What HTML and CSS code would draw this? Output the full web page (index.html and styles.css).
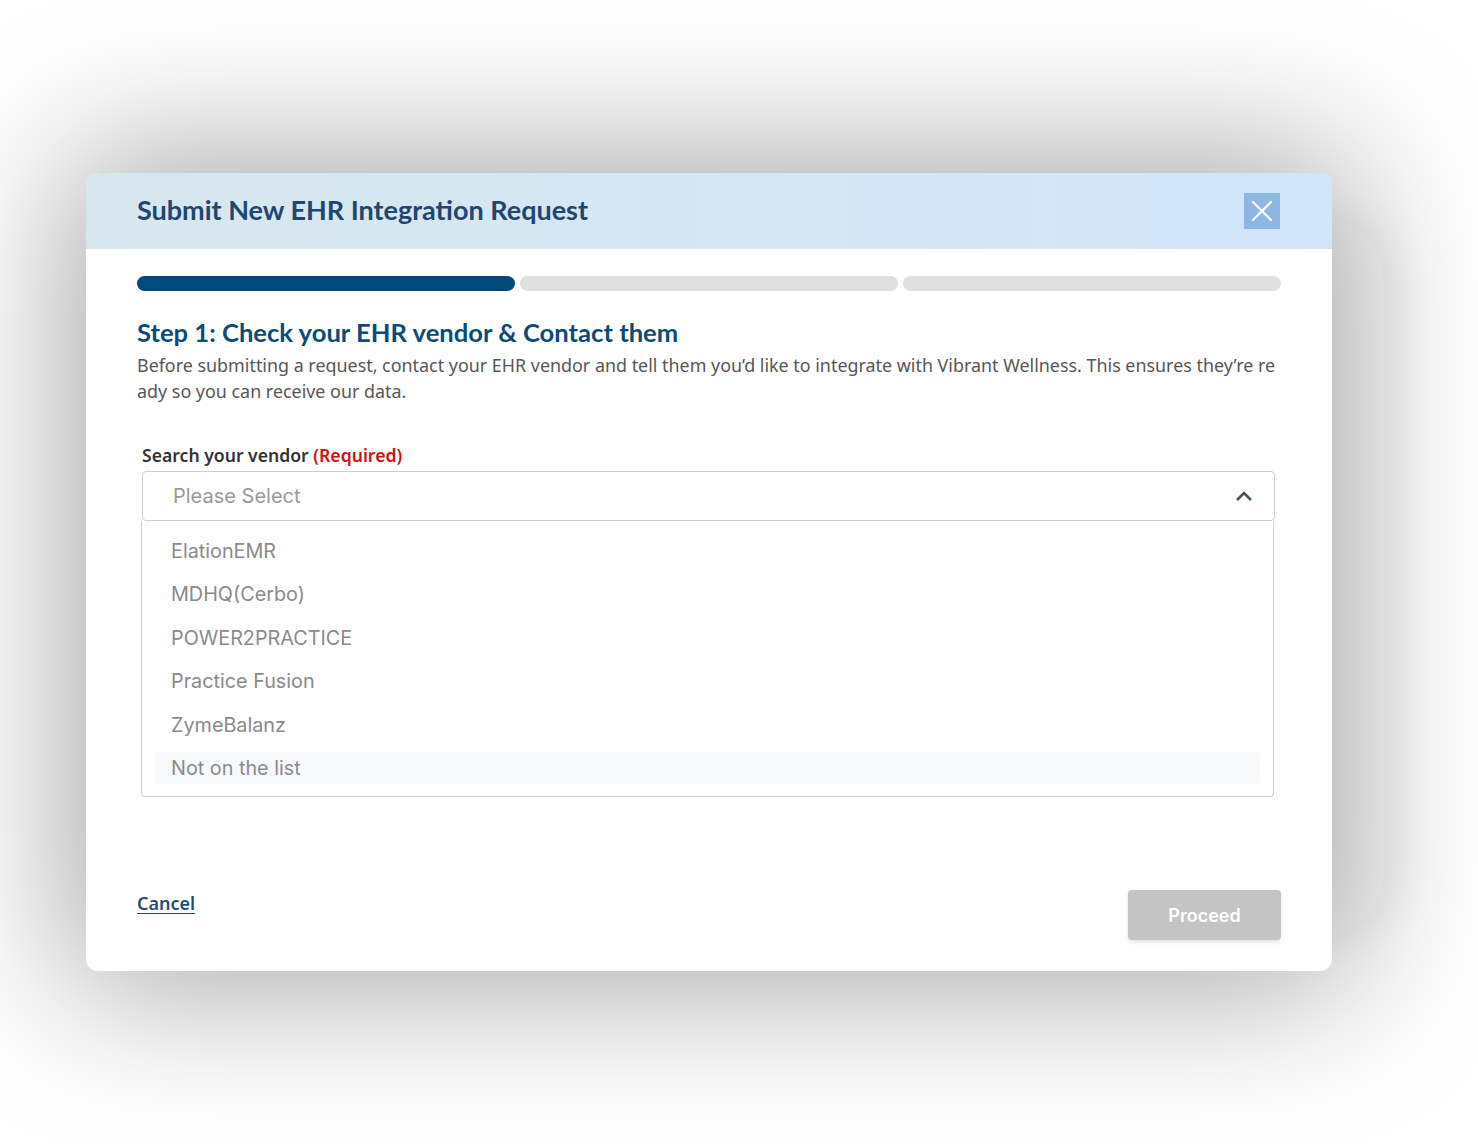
FILE: index.html
```html
<!DOCTYPE html>
<html lang="en">
<head>
    <meta charset="UTF-8">
    <meta name="viewport" content="width=device-width, initial-scale=1.0">
    <title>Submit New EHR Integration Request</title>
    <link rel="stylesheet" href="styles.css">
</head>
<body>
    <div class="stage">
        <div class="modal">
            <header class="modal-header">
                <h1>Submit New EHR Integration Request</h1>
                <button class="close-btn" type="button" aria-label="Close">
                    <svg width="22" height="22" viewBox="0 0 22 22">
                        <path d="M2 2 L20 20 M20 2 L2 20" stroke="#fff" stroke-width="2.4" stroke-linecap="round" fill="none"/>
                    </svg>
                </button>
            </header>

            <div class="modal-body">
                <div class="progress">
                    <span class="bar active"></span>
                    <span class="bar"></span>
                    <span class="bar"></span>
                </div>

                <h2 class="step-title">Step 1: Check your EHR vendor &amp; Contact them</h2>
                <p class="step-desc">Before submitting a request, contact your EHR vendor and tell them you’d like to integrate with Vibrant Wellness. This ensures they’re ready so you can receive our data.</p>

                <div class="field">
                    <label class="field-label">Search your vendor <span class="required">(Required)</span></label>
                    <div class="select">
                        <span class="placeholder">Please Select</span>
                        <svg width="18" height="12" viewBox="0 0 18 12">
                            <path d="M2 10 L9 3 L16 10" stroke="#3b5364" stroke-width="2.6" fill="none"/>
                        </svg>
                    </div>
                    <ul class="options">
                        <li>ElationEMR</li>
                        <li>MDHQ(Cerbo)</li>
                        <li>POWER2PRACTICE</li>
                        <li>Practice Fusion</li>
                        <li>ZymeBalanz</li>
                        <li class="hover">Not on the list</li>
                    </ul>
                </div>
            </div>

            <footer class="modal-footer">
                <a href="#" class="cancel">Cancel</a>
                <button class="proceed" type="button" disabled>Proceed</button>
            </footer>
        </div>
    </div>
</body>
</html>
```

FILE: styles.css
```css
* {
    box-sizing: border-box;
}
body {
    margin: 0;
    background: #fff;
    font-family: "Noto Sans", sans-serif;
    overflow: hidden;
}
.stage {
    padding: 173px 146px 0 86px;
    height: 1144px;
}
.modal {
    position: relative;
    width: 1246px;
    height: 798px;
    background: #fff;
    border-radius: 12px;
    box-shadow: 0 0 150px 20px rgba(0, 0, 0, 0.34);
    display: flex;
    flex-direction: column;
}
/* faint card peeking out behind the right edge */
.modal::before {
    content: "";
    position: absolute;
    top: 42px;
    bottom: 32px;
    right: -52px;
    width: 300px;
    background: #fbfbfb;
    border-radius: 0 70px 70px 0;
    z-index: -1;
    box-shadow: 20px 0 40px rgba(0, 0, 0, 0.04);
}
.modal-header {
    height: 76px;
    padding: 0 51px;
    display: flex;
    align-items: center;
    justify-content: space-between;
    background: linear-gradient(90deg, #d8e7ee 0%, #d2e5f9 100%);
    border-radius: 12px 12px 0 0;
}
.modal-header h1 {
    margin: 0 0 4px;
    font-family: Lato, sans-serif;
    font-weight: 700;
    font-size: 27px;
    color: #1e4670;
}
.close-btn {
    width: 36px;
    height: 36px;
    margin-right: 1px;
    border: none;
    padding: 0;
    background: #8db6e4;
    display: flex;
    align-items: center;
    justify-content: center;
    cursor: pointer;
}
.modal-body {
    padding: 27px 51px 0;
}
.progress {
    display: flex;
    gap: 5px;
}
.bar {
    flex: 1;
    height: 15px;
    border-radius: 8px;
    background: #e0e0e0;
}
.bar.active {
    background: #00497d;
}
.step-title {
    margin: 24px 0 3px;
    font-family: Lato, sans-serif;
    font-weight: 700;
    font-size: 25.6px;
    line-height: 34px;
    color: #0b4b7c;
}
.step-desc {
    margin: 0;
    font-size: 17.9px;
    line-height: 26px;
    color: #575757;
    word-break: break-all;
}
.field {
    margin: 39px 6px 0 5px;
}
.field-label {
    display: block;
    font-weight: 600;
    font-size: 17.6px;
    line-height: 24px;
    color: #333;
    margin-bottom: 4px;
}
.required {
    color: #d40f0f;
}
.select {
    height: 50px;
    border: 1px solid #cfcfcf;
    border-radius: 4px;
    padding: 0 21px 0 30px;
    display: flex;
    align-items: center;
    justify-content: space-between;
}
.placeholder {
    font-family: Inter, sans-serif;
    font-size: 20px;
    color: #9a9a9a;
}
.options {
    list-style: none;
    margin: 0 1px 0 -1px;
    padding: 14px 13px 12px;
    border: 1px solid #cfcfcf;
    border-top: none;
    border-radius: 0 0 4px 4px;
    display: flex;
    flex-direction: column;
    gap: 11.4px;
}
.options li {
    height: 32px;
    line-height: 32px;
    padding-left: 16px;
    font-family: Inter, sans-serif;
    font-size: 19.8px;
    color: #8a8a8a;
    border-radius: 4px;
}
.options li.hover {
    background: #f8f9fb;
}
.modal-footer {
    margin-top: auto;
    padding: 0 51px 31px;
    display: flex;
    justify-content: space-between;
    align-items: flex-start;
}
.cancel {
    font-weight: 600;
    font-size: 18px;
    line-height: 26px;
    color: #1f4d7c;
    text-decoration: underline;
    text-underline-offset: 3px;
}
.proceed {
    width: 153px;
    height: 50px;
    border: none;
    border-radius: 4px;
    background: #c4c4c4;
    color: #fff;
    font-family: Inter, sans-serif;
    font-weight: 600;
    font-size: 18px;
    box-shadow: 0 2px 4px rgba(0, 0, 0, 0.12);
}
```
